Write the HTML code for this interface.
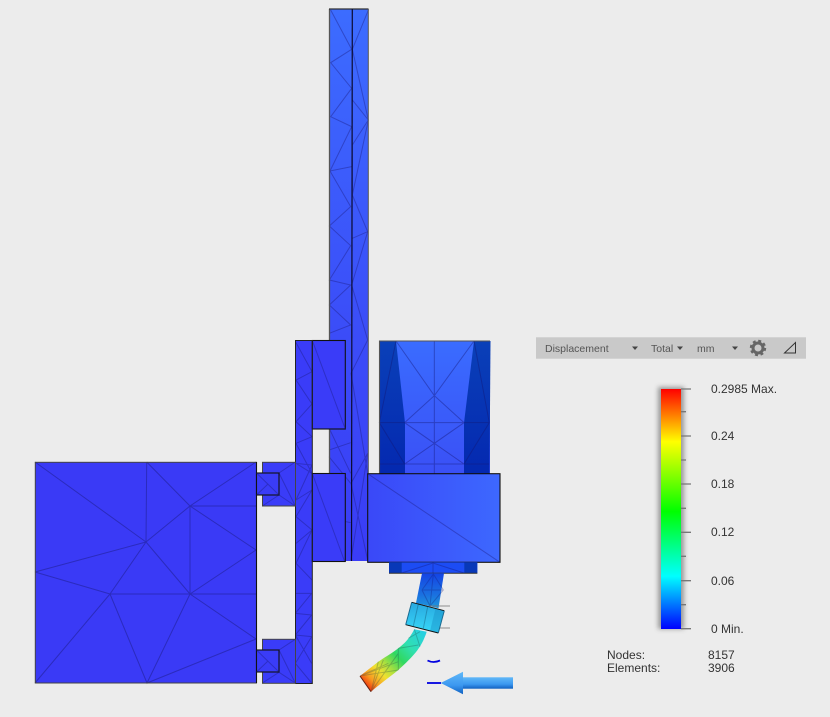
<!DOCTYPE html>
<html>
<head>
<meta charset="utf-8">
<style>
html,body{margin:0;padding:0;background:#ececec;}
body{width:830px;height:717px;position:relative;overflow:hidden;font-family:"Liberation Sans",sans-serif;}
svg{position:absolute;left:0;top:0;}
.t{position:absolute;font-size:12px;line-height:14px;color:#333;white-space:pre;}
.b{position:absolute;font-size:10.5px;line-height:14px;color:#555;white-space:pre;}
</style>
</head>
<body>
<svg width="830" height="717" viewBox="0 0 830 717">
<defs>
<linearGradient id="tall" x1="0" y1="0" x2="0" y2="1"><stop offset="0" stop-color="#3c6cff"/><stop offset=".6" stop-color="#3b4cf8"/><stop offset="1" stop-color="#3a3cf6"/></linearGradient>
<linearGradient id="box" x1="0" y1="0" x2="1" y2="0"><stop offset="0" stop-color="#3a48f8"/><stop offset="1" stop-color="#3d68ff"/></linearGradient>
<linearGradient id="mot" x1="0" y1="0" x2="0" y2="1"><stop offset="0" stop-color="#3a6cff"/><stop offset="1" stop-color="#3a50f6"/></linearGradient>
<linearGradient id="dark" x1="0" y1="0" x2="0" y2="1"><stop offset="0" stop-color="#0a40b8"/><stop offset="1" stop-color="#0428b0"/></linearGradient>
<linearGradient id="tube" x1="0" y1="0" x2="0" y2="1"><stop offset="0" stop-color="#1444e4"/><stop offset=".6" stop-color="#1a70e0"/><stop offset="1" stop-color="#1e98dc"/></linearGradient>
<linearGradient id="collar" x1="0" y1="0" x2="0" y2="1"><stop offset="0" stop-color="#28a8e0"/><stop offset="1" stop-color="#38d8f8"/></linearGradient>
<linearGradient id="bend" gradientUnits="userSpaceOnUse" x1="420" y1="630" x2="365" y2="684"><stop offset="0" stop-color="#28d0e0"/><stop offset=".25" stop-color="#30e0b0"/><stop offset=".45" stop-color="#30d860"/><stop offset=".62" stop-color="#a8e040"/><stop offset=".75" stop-color="#f0e030"/><stop offset=".9" stop-color="#f89820"/><stop offset="1" stop-color="#f04010"/></linearGradient>
<linearGradient id="scale" x1="0" y1="0" x2="0" y2="1"><stop offset="0" stop-color="#ff0000"/><stop offset=".22" stop-color="#ffff00"/><stop offset=".51" stop-color="#00ff00"/><stop offset=".78" stop-color="#00ffff"/><stop offset="1" stop-color="#0000ff"/></linearGradient>
<linearGradient id="arrow" x1="0" y1="0" x2="0" y2="1"><stop offset="0" stop-color="#60b8f8"/><stop offset=".6" stop-color="#3c98f0"/><stop offset="1" stop-color="#1060c0"/></linearGradient>
<filter id="sh" x="-40%" y="-5%" width="180%" height="110%"><feGaussianBlur stdDeviation="2.5"/></filter>
</defs>

<!-- tall column -->
<rect x="329.5" y="9" width="39" height="552" fill="url(#tall)"/>
<g transform="translate(320,0) scale(.33333)" fill="none" stroke="#1c1c80" stroke-opacity=".42" stroke-width="3">
<polyline points="32,30 95,148 32,188 95,265 32,350 95,380 30,513 95,500"/>
<polyline points="30,513 92,620 28,678 92,737 28,840 92,855 28,915 92,975 28,1000"/>
<polyline points="146,28 97,148 145,360 97,300"/>
<polyline points="145,360 97,435 97,585 145,360"/>
<polyline points="97,585 143,695 97,715"/>
<polyline points="143,695 95,855 143,1020"/>
</g>
<g transform="translate(290,330) scale(.33333)" fill="none" stroke="#1c1c80" stroke-opacity=".42" stroke-width="3">
<path d="M117 360L182 338M117 380L182 460M120 300L182 430M233 30L183 130L233 430M233 370L183 460L233 690M233 370L183 690M167 575L182 578"/>
</g>
<path d="M329.5 9V340M329.5 429V473" stroke="#555" stroke-width="1.3" fill="none"/>
<path d="M329 9H368.5" stroke="#333" stroke-width="1.2"/>
<path d="M352.3 9L351.5 561" stroke="#0a0a30" stroke-width="1.2"/>
<path d="M368.3 9V473" stroke="#555" stroke-width="1"/>

<!-- motor -->
<rect x="379.5" y="341" width="110.5" height="133" fill="url(#mot)"/>
<polygon points="379.5,341 396,341 405,423 405,474 379,474" fill="url(#dark)"/>
<polygon points="474,341 490.5,341 489.5,474 464,474 464,423" fill="url(#dark)"/>
<g transform="translate(290,330) scale(.33333)" fill="none" stroke="#141470" stroke-opacity=".4" stroke-width="3">
<path d="M318 33L433 197L552 33M433 33V431M344 278L433 197L522 278M268 278H598M344 278L433 340L522 278M344 402L433 340L522 402M268 402H598M318 33L268 278L344 402M552 33L598 278L522 402"/>
</g>
<path d="M379.5 474V341H490" stroke="#555" stroke-width="1.1" fill="none"/>

<!-- column and blocks -->
<rect x="295.5" y="340.5" width="16.5" height="343" fill="#3a3cf8"/>
<g transform="translate(290,330) scale(.33333)" fill="none" stroke="#1c1c80" stroke-opacity=".42" stroke-width="3">
<polyline points="18,38 66,125 18,150 66,222 18,275 66,320 18,340 66,430 18,400 66,405 18,510 66,480 18,560 66,600 18,640 66,600 18,700 66,750"/>
</g>
<g transform="translate(20,450) scale(.33333)" fill="none" stroke="#1c1c80" stroke-opacity=".42" stroke-width="3">
<path d="M826 430H875M826 490L875 495M826 555L875 560M875 495L826 555M875 430L826 490M875 560L826 640L875 699M826 555L875 640"/>
</g>
<rect x="312.3" y="340.5" width="33" height="88.5" fill="#3a3cf8" stroke="#111" stroke-width="1.1"/>
<path d="M312.3 340.5L345.3 429" stroke="#1c1c80" stroke-opacity=".42"/>
<rect x="312.3" y="473.5" width="33" height="88" fill="#3a3cf8" stroke="#111" stroke-width="1.1"/>
<path d="M312.3 473.5L344.5 561" stroke="#1c1c80" stroke-opacity=".42"/>
<rect x="295.5" y="340.5" width="16.8" height="343" fill="none" stroke="#222" stroke-width="1"/>

<!-- right box -->
<rect x="367.7" y="473.7" width="132.3" height="88.6" fill="url(#box)"/>
<path d="M367.7 473.7L500 562.3" stroke="#1c1c80" stroke-opacity=".4" fill="none"/>
<rect x="367.7" y="473.7" width="132.3" height="88.6" fill="none" stroke="#111" stroke-width="1.1"/>

<!-- flange -->
<rect x="389" y="562.3" width="88.3" height="11" fill="#1c4cf4"/>
<rect x="389" y="562.3" width="12.7" height="11" fill="#0838b8"/>
<rect x="464.3" y="562.3" width="13" height="11" fill="#0838b8"/>
<path d="M401.7 573L433 563L464 573M433 563V573" stroke="#141470" stroke-opacity=".35" fill="none"/>
<path d="M389 573.3H477.3" stroke="#333" stroke-width="1"/>

<!-- tube -->
<polygon points="422,573.3 444,573.3 438.5,608.3 416,603" fill="url(#tube)"/>
<g transform="translate(350,550) scale(.33333)" fill="none" stroke="#141470" stroke-opacity=".3" stroke-width="3">
<path d="M216 120L250 72L280 120L240 168L216 120M250 72L240 168M216 120H280"/>
</g>
<path d="M430 606H450M430 628H450" stroke="#777" stroke-width="1" opacity=".8"/>

<!-- bend -->
<path d="M414.3 629.3C410 638 404 644 398.3 648.3C391 654 385 657 378.3 661.7L360 676L371 691.7C381 683 390 677 398.3 670C410 659 421 650 426.7 631.7Z" fill="url(#bend)"/>
<g transform="translate(355,620) scale(.33333)" fill="none" stroke="#204040" stroke-opacity=".28" stroke-width="3">
<path d="M15 168L130 125M15 168L100 130M48 215L85 120M48 215L130 100M48 215L70 125M15 168L130 150M130 85L130 150M130 85L190 75M178 28L195 80M160 55L195 35"/>
</g>
<path d="M360 676L371 691.7" stroke="#602010" stroke-width="1"/>

<!-- collar -->
<polygon points="411.7,602.3 444.3,610.7 438.3,633 405.7,624.7" fill="url(#collar)"/>
<polygon points="435.5,608.5 444.3,610.7 438.3,633 430,631" fill="#1890c8" opacity=".45"/>
<g transform="translate(350,550) scale(.33333)" fill="none" stroke="#105070" stroke-opacity=".4" stroke-width="3">
<path d="M205 162L190 228M233 170L220 235M205 162L233 170L220 235"/>
</g>
<path d="M411.7 602.3L444.3 610.7M405.7 624.7L438.3 633" stroke="#111" stroke-width="1"/>
<path d="M411.7 602.3L405.7 624.7M444.3 610.7L438.3 633" stroke="#1a6a90" stroke-width="1"/>

<!-- blue marks and arrow -->
<path d="M427.5 660.5Q433.5 663.5 440 660.5" stroke="#0000e0" stroke-width="1.8" fill="none"/>
<path d="M427 683H441" stroke="#0000e0" stroke-width="1.8"/>
<rect x="462" y="677.3" width="51" height="11.4" fill="url(#arrow)"/>
<polygon points="440.7,683 463,671.7 463,694.3" fill="url(#arrow)"/>

<!-- big square -->
<rect x="35.3" y="462.3" width="221.2" height="220.7" fill="#3a3af6"/>
<g fill="none" stroke="#1c1c80" stroke-opacity=".48" stroke-width="1">
<path d="M35 462L146 542M146.7 462L146 542M146.7 462L190 506M256 462L190 506H256M190 506L146 542M190 506V594M190 506L256 550L190 594M146 542L190 594M146 542L35 572M146 542L110 594M35 572L110 594H190H256M110 594L35 683M110 594L147 683L190 594L256 639L147 683"/>
</g>
<rect x="35.3" y="462.3" width="221.2" height="220.7" fill="none" stroke="#444" stroke-width="1"/>
<path d="M256.5 462V683" stroke="#111" stroke-width="1.1"/>

<!-- brackets -->
<g fill="#3a3cf8">
<rect x="262.5" y="462.3" width="33" height="43.7"/>
<rect x="262.5" y="639.3" width="33" height="44"/>
</g>
<g transform="translate(20,450) scale(.33333)" fill="none" stroke="#1c1c80" stroke-opacity=".42" stroke-width="3">
<path d="M777 69L826 168M777 135L826 168M777 69L826 36M727 168L777 135M777 600L826 699M777 667L826 699M777 600L826 568M727 699L777 667"/>
</g>
<rect x="262.5" y="462.3" width="33" height="43.7" fill="none" stroke="#444" stroke-width="1"/>
<rect x="262.5" y="639.3" width="33" height="44" fill="none" stroke="#444" stroke-width="1"/>
<rect x="256.5" y="473" width="22.5" height="22" fill="#3a3cf8" stroke="#111" stroke-width="1.1"/>
<rect x="256.5" y="650" width="22.5" height="22" fill="#3a3cf8" stroke="#111" stroke-width="1.1"/>
<path d="M256.5 473L279 495M256.5 495L268 484M256.5 650L279 672M256.5 672L268 661" stroke="#1c1c80" stroke-opacity=".42" fill="none"/>

<!-- toolbar -->
<rect x="536" y="337.3" width="270" height="21.4" fill="#c9c9c9"/>
<g fill="#444">
<polygon points="632,346.5 638,346.5 635,350"/>
<polygon points="677,346.5 683,346.5 680,350"/>
<polygon points="732,346.5 738,346.5 735,350"/>
</g>
<circle cx="758" cy="348" r="5" fill="none" stroke="#666" stroke-width="3"/>
<circle cx="758" cy="348" r="7" fill="none" stroke="#666" stroke-width="2.4" stroke-dasharray="2.9 2.6"/>
<path d="M784.5 353H795.5V342.5Z" fill="none" stroke="#333" stroke-width="1"/>

<!-- scale -->
<rect x="658" y="387" width="26" height="242" fill="#555" opacity=".55" filter="url(#sh)"/>
<rect x="661" y="389" width="20" height="240" fill="url(#scale)"/>
<g stroke="#777" stroke-width="1.3">
<path d="M681 389H691M681 436H691M681 484H691M681 532.3H691M681 580.7H691M681 628.7H691"/>
<path d="M681 411.7H686M681 460H686M681 508.3H686M681 556.3H686M681 604.7H686"/>
</g>
</svg>

<div class="b" style="left:545px;top:342px;">Displacement</div>
<div class="b" style="left:651px;top:342px;">Total</div>
<div class="b" style="left:697px;top:342px;">mm</div>

<div class="t" style="left:711px;top:382px;">0.2985 Max.</div>
<div class="t" style="left:711px;top:429px;">0.24</div>
<div class="t" style="left:711px;top:477px;">0.18</div>
<div class="t" style="left:711px;top:525px;">0.12</div>
<div class="t" style="left:711px;top:574px;">0.06</div>
<div class="t" style="left:711px;top:622px;">0 Min.</div>
<div class="t" style="left:607px;top:648px;">Nodes:</div>
<div class="t" style="left:708px;top:648px;">8157</div>
<div class="t" style="left:607px;top:661px;">Elements:</div>
<div class="t" style="left:708px;top:661px;">3906</div>
</body>
</html>
